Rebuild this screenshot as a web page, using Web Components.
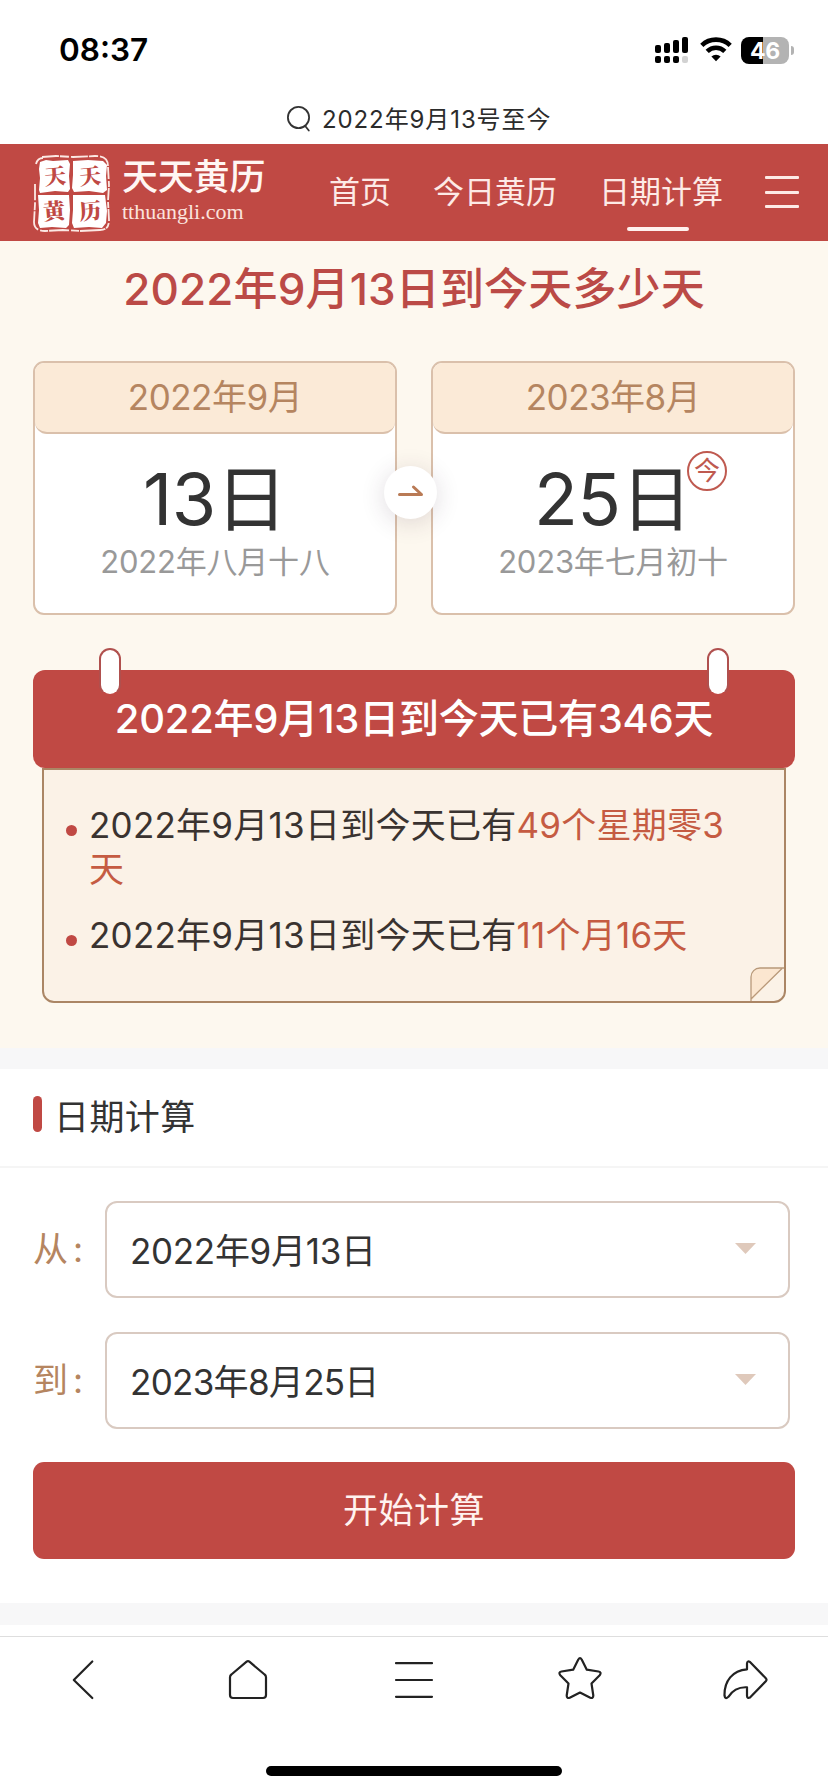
<!DOCTYPE html>
<html lang="zh-CN">
<head>
<meta charset="utf-8">
<title>2022年9月13日到今天多少天</title>
<style>
  body {
    margin: 0;
    background: #fff;
    color: #333;
    font-family: Inter, "Noto Sans CJK SC", sans-serif;
  }
  .result {
    background: #fdf8ef;
    height: 807px;
  }
  .result h1 {
    margin: 0;
    height: 120px;
    line-height: 97px;
    text-align: center;
    font-size: 44px;
    font-weight: 500;
    letter-spacing: .15px;
    color: #bb4a46;
  }
  .pair {
    position: relative;
    display: flex;
    justify-content: space-between;
    padding: 0 33px;
    margin-bottom: 55px;
  }
  .fields {
    padding: 33px 33px 44px;
  }
</style>
</head>
<body>
  <status-bar time="08:37" battery="46"></status-bar>
  <search-title>2022年9月13号至今</search-title>
  <site-header>
    <nav-link>首页</nav-link>
    <nav-link>今日黄历</nav-link>
    <nav-link active>日期计算</nav-link>
  </site-header>
  <div class="result">
    <h1>2022年9月13日到今天多少天</h1>
    <div class="pair">
      <date-card month="2022年9月" day="13日" lunar="2022年八月十八"></date-card>
      <date-card month="2023年8月" day="25日" lunar="2023年七月初十" today></date-card>
      <arrow-dot></arrow-dot>
    </div>
    <result-note>
      <span slot="title">2022年9月13日到今天已有346天</span>
      <note-item>2022年9月13日到今天已有<b slot="value">49个星期零3天</b></note-item>
      <note-item>2022年9月13日到今天已有<b slot="value">11个月16天</b></note-item>
    </result-note>
  </div>
  <section-gap style="--h:21px"></section-gap>
  <section-title>日期计算</section-title>
  <div class="fields">
    <date-field label="从" style="--track:-.3px">2022年9月13日</date-field>
    <date-field label="到" style="--track:-.7px">2023年8月25日</date-field>
    <submit-button>开始计算</submit-button>
  </div>
  <section-gap style="--h:22px"></section-gap>
  <tab-bar></tab-bar>

<script>
// every element here is a style + markup pair in an open shadow root
class Base extends HTMLElement {
    constructor() {
        super();
        this.attachShadow({mode: 'open'});
        this.shadowRoot.innerHTML = this.render();
    }
}

// phone status bar
class StatusBar extends Base {
    render() {
        return `
<style>
  :host{display:flex;height:98px;box-sizing:border-box;padding:26px 34px 0 59px;justify-content:space-between;align-items:flex-start;color:#000}
  .time{font-size:31.5px;font-weight:600;line-height:48px}
  .icons{display:flex;padding-top:10px}
  .wifi{margin:0 9px 0 11px}
  .battery{display:flex;align-items:center}
  .cell{width:48px;height:27px;border-radius:8px;background:linear-gradient(90deg,#000 46%,#b3b3b3 46%);color:#fff;font-size:23px;font-weight:700;line-height:28px;text-align:center;letter-spacing:-.3px}
  .nub{width:3px;height:9px;margin-left:2px;border-radius:0 4px 4px 0;background:#b3b3b3}
</style>
<span class="time">${this.getAttribute('time')}</span>
<div class="icons">
  <svg width="34" height="28" viewBox="0 0 34 28">
    <rect x="0" y="9" width="6" height="8" rx="2"/><rect x="9" y="7" width="6" height="10" rx="2"/>
    <rect x="18" y="4" width="6" height="13" rx="2"/><rect x="27" y="1" width="6" height="16" rx="2"/>
    <rect x="0" y="20" width="6" height="7" rx="2"/><rect x="9" y="20" width="6" height="7" rx="2"/>
    <rect x="18" y="20" width="6" height="7" rx="2"/><rect x="27" y="20" width="6" height="7" rx="2" fill="#d2d2d2"/>
  </svg>
  <svg class="wifi" width="32" height="27" viewBox="0 0 32 27" fill="none" stroke="#000" stroke-width="4.6">
    <path d="M1.8 9.3a20.5 20.5 0 0 1 28.4 0"/><path d="M7.2 15.3a12.6 12.6 0 0 1 17.6 0"/>
    <path d="M16 25.2l-4.6-4.6a6.6 6.6 0 0 1 9.2 0z" fill="#000" stroke="none"/>
  </svg>
  <div class="battery"><div class="cell">${this.getAttribute('battery')}</div><div class="nub"></div></div>
</div>`;
    }
}
customElements.define('status-bar', StatusBar);

// browser address line
class SearchTitle extends Base {
    render() {
        return `
<style>
  :host{display:flex;height:46px;padding-left:287px;align-items:flex-start;font-size:24px;line-height:44px;letter-spacing:.9px;color:#2b2b2b;white-space:nowrap}
  svg{margin:8px 10px 0 0}
</style>
<svg width="25" height="26" viewBox="0 0 25 26" fill="none" stroke="#333" stroke-width="1.8" stroke-linecap="round">
  <circle cx="11.500" cy="11.500" r="10.600"/><path d="M18.200 20l3.600 4.500"/>
</svg>
<slot></slot>`;
    }
}
customElements.define('search-title', SearchTitle);

// red seal next to the site name
class SiteSeal extends Base {
    render() {
        return `
<style>
  :host{display:block;width:78px;height:78px}
  svg{display:block}
  text{font-family:"Noto Serif CJK SC","Noto Sans CJK SC",sans-serif;font-weight:900;font-size:22px;fill:#c04944;text-anchor:middle}
</style>
<svg width="78" height="78" viewBox="0 0 78 78">
  <g fill="none" stroke="#fce9e4" stroke-width="1.8">
    <path d="M9 2l14-1 17 1 22-1c9 0 13 3 13 10" stroke-dasharray="17 1 9 2"/>
    <path d="M75 12l1 18-1 16 1 19c0 7-3 10-9 10" stroke-dasharray="12 2 6 1"/>
    <path d="M67 75l-20 1-17-1-18 1c-7 0-11-3-11-9l1-18V29" stroke-dasharray="20 1 8 2"/>
    <path d="M3 9c1-4 3-6 7-6"/>
  </g>
  <g fill="#fff">
    <path d="M7 7l6-2 7 1 15-1 2 4-1 12 1 13-2 3-13-1-15 2-1-3 1-12-1-9z"/>
    <path d="M40 6l15-1 15 1 4 4-1 11 1 14-4 3-14-2-15 1-2-4 1-13z"/>
    <path d="M5 40l16 0 15 0 1 15-1 15-3 3-14-1-12 1-2-5 1-13z"/>
    <path d="M40 40l16 0 16 0 2 16-1 12-4 5-13-1-15 1-2-5 1-13z"/>
  </g>
  <text x="22" y="29" transform="rotate(-5 22 21)">天</text><text x="57" y="29" transform="rotate(-5 57 21)">天</text>
  <text x="21" y="64" transform="rotate(-5 21 56)">黄</text><text x="57" y="64" transform="rotate(-5 57 56)">历</text>
</svg>`;
    }
}
customElements.define('site-seal', SiteSeal);

class NavLink extends Base {
    render() {
        return `
<style>
  :host{display:flex;flex-direction:column;align-items:center;height:97px;font-size:31px;line-height:95px;color:#fdeae6;white-space:nowrap}
  i{display:none;width:62px;height:4px;border-radius:2px;margin:-12px 7px 0 0;background:#fff1ee}
  :host([active]) i{display:block}
</style>
<slot></slot><i></i>`;
    }
}
customElements.define('nav-link', NavLink);

class SiteHeader extends Base {
    render() {
        return `
<style>
  :host{display:flex;height:97px;background:#c04944;color:#fff;padding-left:33px;align-items:flex-start}
  site-seal{margin-top:11px}
  .name{width:207px;padding-left:11px;display:flex;flex-direction:column;white-space:nowrap}
  .name strong{font-size:36px;font-weight:500;line-height:40px;margin-top:13px;letter-spacing:-.2px;color:#fff6f3}
  .name small{font:22px/24px "Liberation Serif",serif;margin-top:3px;color:#fbe3dd}
  .links{display:flex;gap:42px}
  .menu{width:34px;height:32px;margin:32px 0 0 42px;display:flex;flex-direction:column;justify-content:space-between}
  .menu i{height:3px;border-radius:1px;background:#fdeae6}
</style>
<site-seal></site-seal>
<div class="name"><strong>天天黄历</strong><small>tthuangli.com</small></div>
<div class="links"><slot></slot></div>
<div class="menu"><i></i><i></i><i></i></div>`;
    }
}
customElements.define('site-header', SiteHeader);

// calendar leaf: month on top, day and lunar date below
class DateCard extends Base {
    render() {
        return `
<style>
  :host{display:block;box-sizing:border-box;width:364px;height:254px;border:2px solid #dac0ab;border-radius:11px;background:#fff;text-align:center;white-space:nowrap}
  .month{height:69px;line-height:68px;border-bottom:2px solid #dac0ab;border-radius:9px 9px 12px 12px;background:#fbead7;color:#b58560;font-size:35px;letter-spacing:-.5px}
  .day{height:109px;line-height:129px;font-size:72px;letter-spacing:-.6px;color:#333}
  .day span{position:relative}
  .lunar{line-height:37px;font-size:31px;letter-spacing:-.2px;color:#999}
  em{display:none;position:absolute;left:100%;top:-4px;margin-left:-5px;box-sizing:border-box;width:40px;height:40px;border:2px solid #bf5a50;border-radius:50%;font-style:normal;font-size:26px;line-height:35px;letter-spacing:0;color:#bf5a50}
  :host([today]) em{display:block}
</style>
<div class="month">${this.getAttribute('month')}</div>
<div class="day"><span>${this.getAttribute('day')}${this.hasAttribute('today') ? '<em>今</em>' : ''}</span></div>
<div class="lunar">${this.getAttribute('lunar')}</div>`;
    }
}
customElements.define('date-card', DateCard);

// round arrow laid over the gap between the cards
class ArrowDot extends Base {
    render() {
        return `
<style>
  :host{position:absolute;left:384px;top:105px;width:53px;height:53px;border-radius:50%;background:#fff;box-shadow:0 4px 24px rgba(60,40,60,.16)}
  svg{display:block}
</style>
<svg width="53" height="53" viewBox="0 0 53 53" fill="none" stroke="#b97a55" stroke-width="3" stroke-linecap="round" stroke-linejoin="round">
  <path d="M15.500 28.500H37.500L29.500 21"/>
</svg>`;
    }
}
customElements.define('arrow-dot', ArrowDot);

class ResultNote extends Base {
    render() {
        return `
<style>
  :host{display:block;margin:0 33px}
  .head{position:relative;height:98px;line-height:97px;border-radius:12px;background:#c04944;color:#fff;text-align:center;font-size:40px;font-weight:500;letter-spacing:-.25px;white-space:nowrap}
  .pin{position:absolute;top:-22px;box-sizing:border-box;width:22px;height:48px;border:2px solid #b0504e;border-bottom-color:#c04944;border-radius:11px;background:#fff}
  .pin.l{left:66px}
  .pin.r{right:66px}
  .body{position:relative;box-sizing:border-box;height:235px;margin:0 9px;padding:33px 44px 0 20px;border:2px solid #ab8665;border-radius:0 0 12px 12px;background:#fbf2e7;display:flex;flex-direction:column;gap:22px}
  svg{position:absolute;right:0;bottom:0}
</style>
<div class="head"><i class="pin l"></i><slot name="title"></slot><i class="pin r"></i></div>
<div class="body">
  <slot></slot>
  <svg width="34" height="34" viewBox="0 0 34 34">
    <path d="M1 34V10a9 9 0 0 1 9-9H33z" fill="#fbe6d0"/>
    <path d="M1 34V10a9 9 0 0 1 9-9H34M1 32L32 1.500" fill="none" stroke="#b8997a" stroke-width="1.300"/>
  </svg>
</div>`;
    }
}
customElements.define('result-note', ResultNote);

class NoteItem extends Base {
    render() {
        return `
<style>
  :host{display:flex;font-size:35px;line-height:44px;letter-spacing:.25px;color:#3a3330}
  i{flex:none;width:11px;height:11px;border-radius:50%;margin:22px 12px 0 2px;background:#c04944}
  ::slotted(b){font-weight:400;color:#c55b42}
</style>
<i></i><div><slot></slot><slot name="value"></slot></div>`;
    }
}
customElements.define('note-item', NoteItem);

class SectionGap extends Base {
    render() {
        return `<style>:host{display:block;height:var(--h);background:#f7f7f8}</style>`;
    }
}
customElements.define('section-gap', SectionGap);

class SectionTitle extends Base {
    render() {
        return `
<style>
  :host{display:flex;height:97px;padding-left:33px;border-bottom:2px solid #f5f5f5;font-size:35px;line-height:96px;letter-spacing:.4px;color:#333}
  i{width:9px;height:36px;margin:27px 12px 0 0;border-radius:5px;background:#c04944}
</style>
<i></i><slot></slot>`;
    }
}
customElements.define('section-title', SectionTitle);

class DateField extends Base {
    render() {
        return `
<style>
  :host{display:flex;height:97px;margin-bottom:34px;font-size:35px;line-height:96px}
  :host(:nth-of-type(2)){margin-bottom:33px}
  label{width:72px;color:#b58560;white-space:nowrap}
  label span{display:inline-block;margin-left:5px}
  .box{box-sizing:border-box;width:685px;height:97px;padding:0 32px 0 23px;border:2px solid #d9cac1;border-radius:12px;display:flex;justify-content:space-between;letter-spacing:var(--track);color:#333}
  svg{margin-top:40px}
</style>
<label>${this.getAttribute('label')}<span>:</span></label>
<div class="box"><span><slot></slot></span><svg width="21" height="11" viewBox="0 0 21 11"><path d="M0 0H21L10.500 11z" fill="#dfc9bb"/></svg></div>`;
    }
}
customElements.define('date-field', DateField);

class SubmitButton extends Base {
    render() {
        return `
<style>
  :host{display:block;height:97px;line-height:97px;border-radius:11px;background:#c04944;color:#fff2ef;text-align:center;font-size:35px;letter-spacing:.5px}
</style>
<slot></slot>`;
    }
}
customElements.define('submit-button', SubmitButton);

// browser toolbar with the home indicator under it
class TabBar extends Base {
    render() {
        return `
<style>
  :host{display:block;margin-top:11px;height:156px;box-sizing:border-box;border-top:1px solid #dedede}
  .row{display:grid;grid-template-columns:repeat(5,1fr);justify-items:center;height:129px;padding-top:19px;box-sizing:border-box}
  svg{fill:none;stroke:#222;stroke-width:2.200;stroke-linecap:round;stroke-linejoin:round}
  .home{width:296px;height:10px;margin:0 auto;border-radius:5px;background:#000}
</style>
<div class="row">
  <svg width="48" height="48" viewBox="0 0 48 48"><path d="M33.300 5.500L14.800 24L33.300 42"/></svg>
  <svg width="48" height="48" viewBox="0 0 48 48"><path d="M22.600 5.700a2.200 2.200 0 0 1 2.800 0L40.600 18.500a3.500 3.500 0 0 1 1.400 2.700V39a3 3 0 0 1-3 3H9a3 3 0 0 1-3-3V21.200a3.500 3.500 0 0 1 1.400-2.700z"/></svg>
  <svg width="48" height="48" viewBox="0 0 48 48"><path d="M6 7.200H42M6 24H42M6 40.800H42"/></svg>
  <svg width="48" height="48" viewBox="0 0 48 48"><path d="M22.300 3.500q1.700-2.600 3.400 0L30.800 13.700 42.500 15.500q3.500.8 1.200 3.700L35.500 27.500 37.300 39.500q0 3.200-3 2.300L24 36.500 13.700 41.800q-3 .9-3-2.300L12.500 27.500 4.300 19.200q-2.300-2.900 1.200-3.700L17.200 13.700z"/></svg>
  <svg width="48" height="48" viewBox="0 0 48 48"><path d="M26 13.300V7.500q.2-3 3-1.600L44.800 22.200q1.400 1.500 0 3L29 41.500q-2.800 1.200-3-1.500V31.300q-12-.7-18.600 9.500-3.400 3-3.900-1.300C3.200 25 11.500 14.300 26 13.300z"/></svg>
</div>
<div class="home"></div>`;
    }
}
customElements.define('tab-bar', TabBar);
</script>
</body>
</html>
